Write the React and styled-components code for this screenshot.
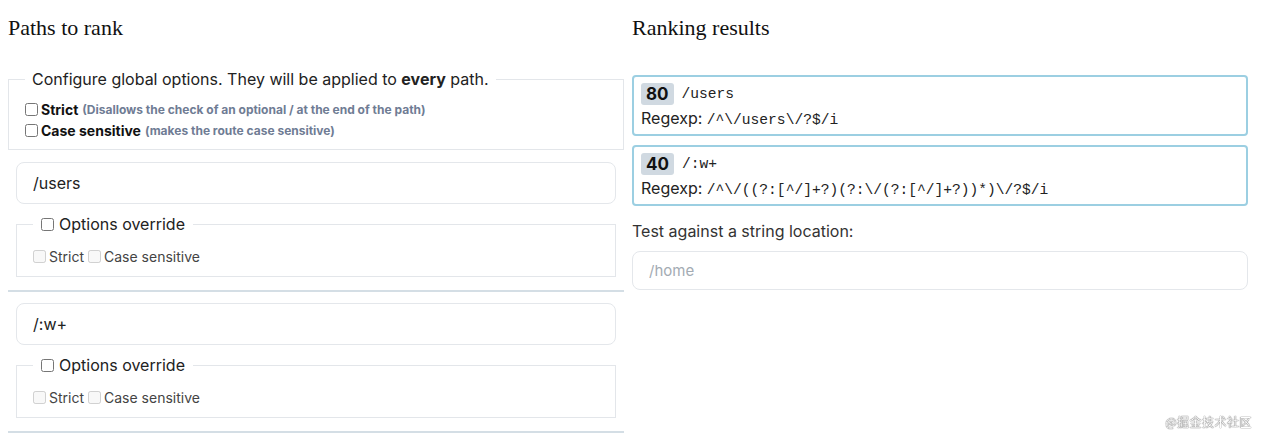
import React from "react";
import styled, { createGlobalStyle } from "styled-components";

const GlobalStyle = createGlobalStyle`
  body {
    margin: 8px;
    font-family: Inter, "Noto Sans", sans-serif;
    color: #222;
    background: #fff;
  }
  * { box-sizing: border-box; }
`;

const Page = styled.div`
  display: grid;
  grid-template-columns: 616px 616px;
  column-gap: 8px;
  align-items: start;
`;

const Column = styled.section`
  display: flex;
  flex-direction: column;
`;

const Heading = styled.h2`
  margin: 0;
  padding-top: 8px;
  height: 48px;
  font-family: "Liberation Serif", "DejaVu Serif", serif;
  font-weight: normal;
  font-size: 22px;
  line-height: 24px;
  color: #111;
`;

const Fieldset = styled.fieldset`
  margin: ${(p) => p.$margin || "0"};
  padding: ${(p) => p.$padding || "0"};
  border: 1px solid #e3e6ea;
  min-width: 0;
`;

const Legend = styled.legend`
  padding: 0 ${(p) => p.$pad || "7px"};
  font-size: 16px;
  line-height: 20px;
  color: #222;
  display: flex;
  align-items: center;
  gap: 2px;
`;

const Check = styled.input.attrs({ type: "checkbox" })`
  width: 13px;
  height: 13px;
  margin: 0 3px 0 0;
  flex: none;
`;

const OptionRow = styled.label`
  display: flex;
  align-items: center;
  height: 21px;
  font-size: 14px;
  font-weight: 700;
  color: #111;
`;

const Hint = styled.span`
  margin-left: 4px;
  font-size: 12px;
  font-weight: 700;
  color: #6f7c94;
`;

const PathItem = styled.div`
  padding: 11px 8px 13px;
  border-bottom: 2px solid #d4dee5;
`;

const TextInput = styled.input`
  display: block;
  width: 100%;
  height: ${(p) => p.$h || "42px"};
  padding: 0 16px;
  border: 1px solid #e4e7eb;
  border-radius: 8px;
  font-family: Inter, sans-serif;
  font-size: ${(p) => p.$fs || "16px"};
  color: #222;
  outline: none;
  &::placeholder { color: #a3abb3; }
`;

const Small = styled.label`
  display: inline-flex;
  align-items: center;
  font-size: 14px;
  color: #444;
  margin-right: 4px;
`;

const SmallRow = styled.div`
  display: flex;
  align-items: center;
  height: 20px;
`;

const ResultList = styled.div`
  margin-top: 19px;
  display: flex;
  flex-direction: column;
  gap: 9px;
`;

const Result = styled.div`
  height: 61px;
  border: 2px solid #9ccfe2;
  border-radius: 4px;
  padding: 6px 7px;
  display: flex;
  flex-direction: column;
  gap: 2px;
`;

const ResultHead = styled.div`
  display: flex;
  align-items: center;
  height: 22px;
`;

const Score = styled.span`
  background: #d0d9e1;
  border-radius: 3px;
  padding: 0 5px;
  height: 22px;
  line-height: 22px;
  font-size: 17px;
  font-weight: 700;
  color: #111;
`;

const Mono = styled.code`
  font-family: "Liberation Mono", "DejaVu Sans Mono", monospace;
  font-size: 14.6px;
  color: #222;
  margin-left: ${(p) => p.$ml || "0"};
`;

const Regexp = styled.div`
  font-size: 16px;
  line-height: 22px;
  color: #222;
`;

const TestLabel = styled.div`
  margin-top: 15px;
  font-size: 16px;
  line-height: 20px;
  color: #333;
`;

const TestInput = styled.div`
  margin-top: 10px;
`;

const Watermark = styled.div`
  position: fixed;
  right: 10px;
  bottom: 8px;
  font-family: "Noto Sans CJK SC", sans-serif;
  font-size: 12px;
  color: #fff;
  text-shadow: 0 0 1px #555, 0 0 1px #555;
  letter-spacing: 0.5px;
`;

const paths = ["/users", "/:w+"];

const results = [
  { score: 80, path: "/users", re: "/^\\/users\\/?$/i" },
  { score: 40, path: "/:w+", re: "/^\\/((?:[^/]+?)(?:\\/(?:[^/]+?))*)\\/?$/i" },
];

export default function App() {
  return (
    <>
      <GlobalStyle />
      <Page>
        <Column>
          <Heading>Paths to rank</Heading>
          <Fieldset $margin="13px 0 1px" $padding="0 12px 8px 16px">
            <Legend>
              <span>
                Configure global options. They will be applied to <b>every</b> path.
              </span>
            </Legend>
            <div style={{ height: 10 }} />
            <OptionRow>
              <Check />
              Strict
              <Hint>(Disallows the check of an optional / at the end of the path)</Hint>
            </OptionRow>
            <OptionRow>
              <Check />
              Case sensitive
              <Hint>(makes the route case sensitive)</Hint>
            </OptionRow>
          </Fieldset>
          {paths.map((p) => (
            <PathItem key={p}>
              <TextInput defaultValue={p} />
              <Fieldset $margin="10px 0 0" $padding="0 12px 10px 16px">
                <Legend $pad="8px">
                  <Check />
                  Options override
                </Legend>
                <div style={{ height: 12 }} />
                <SmallRow>
                  <Small>
                    <Check disabled />
                    Strict
                  </Small>
                  <Small>
                    <Check disabled />
                    Case sensitive
                  </Small>
                </SmallRow>
              </Fieldset>
            </PathItem>
          ))}
        </Column>
        <Column>
          <Heading>Ranking results</Heading>
          <ResultList>
            {results.map((r) => (
              <Result key={r.path}>
                <ResultHead>
                  <Score>{r.score}</Score>
                  <Mono $ml="8px">{r.path}</Mono>
                </ResultHead>
                <Regexp>
                  Regexp: <Mono>{r.re}</Mono>
                </Regexp>
              </Result>
            ))}
          </ResultList>
          <TestLabel>Test against a string location:</TestLabel>
          <TestInput>
            <TextInput $h="39px" $fs="15px" placeholder="/home" />
          </TestInput>
        </Column>
      </Page>
      <Watermark>@掘金技术社区</Watermark>
    </>
  );
}
